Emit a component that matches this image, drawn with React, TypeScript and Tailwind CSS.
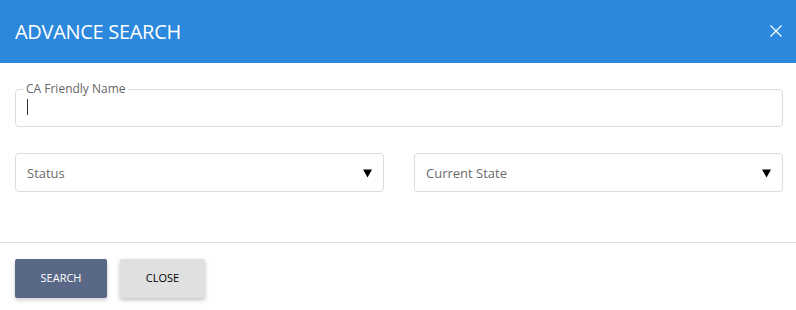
import React from "react";

function SelectBox({ label }: { label: string }) {
  return (
    <div className="flex h-[39px] items-center justify-between rounded-[4px] border border-[#dcdcdc] bg-white pl-[11px] pr-[11px]">
      <span className="pt-[2px] text-[13px] text-[#6a6a6a]">{label}</span>
      <svg width="9" height="9" viewBox="0 0 9 9" className="mt-[1px]">
        <path d="M0 0.5 H9 L4.5 8.5 Z" fill="#000" />
      </svg>
    </div>
  );
}

export default function App() {
  return (
    <div
      className="h-[310px] w-[796px] bg-white"
      style={{ fontFamily: '"Open Sans", "Noto Sans", sans-serif' }}
    >
      {/* header */}
      <div className="flex h-[63px] items-center justify-between bg-[#2b88dc] pl-[15px] pr-[14px]">
        <h1 className="text-[20px] font-normal tracking-[-0.3px] text-white">ADVANCE SEARCH</h1>
        <svg width="12" height="12" viewBox="0 0 12 12" className="mt-[-2px]">
          <path d="M0.5 0.5 L11.5 11.5 M11.5 0.5 L0.5 11.5" stroke="#fff" strokeWidth="1.2" />
        </svg>
      </div>

      {/* body */}
      <div className="pl-[15px] pr-[13px] pt-[19px] pb-[50px]">
        <fieldset className="h-[45px] rounded-[4px] border border-[#dcdcdc] px-[11px]">
          <legend className="ml-[-3px] px-[2px] text-[12px] leading-[14px] text-[#666]">
            CA Friendly Name
          </legend>
          <div className="mt-[3px] h-[16px] w-[1px] bg-[#333]" />
        </fieldset>

        <div className="mt-[26px] grid grid-cols-2 gap-[30px]">
          <SelectBox label="Status" />
          <SelectBox label="Current State" />
        </div>
      </div>

      {/* footer */}
      <div className="flex gap-[13px] border-t border-[#e0e0e0] px-[15px] pt-[16px]">
        <button className="h-[39px] w-[92px] rounded-[2px] bg-[#596886] text-[11px] text-white shadow-[0_2px_4px_rgba(0,0,0,0.2)]">
          SEARCH
        </button>
        <button className="h-[39px] w-[85px] rounded-[2px] bg-[#e0e0e0] text-[11px] text-black shadow-[0_2px_4px_rgba(0,0,0,0.25)]">
          CLOSE
        </button>
      </div>
    </div>
  );
}
